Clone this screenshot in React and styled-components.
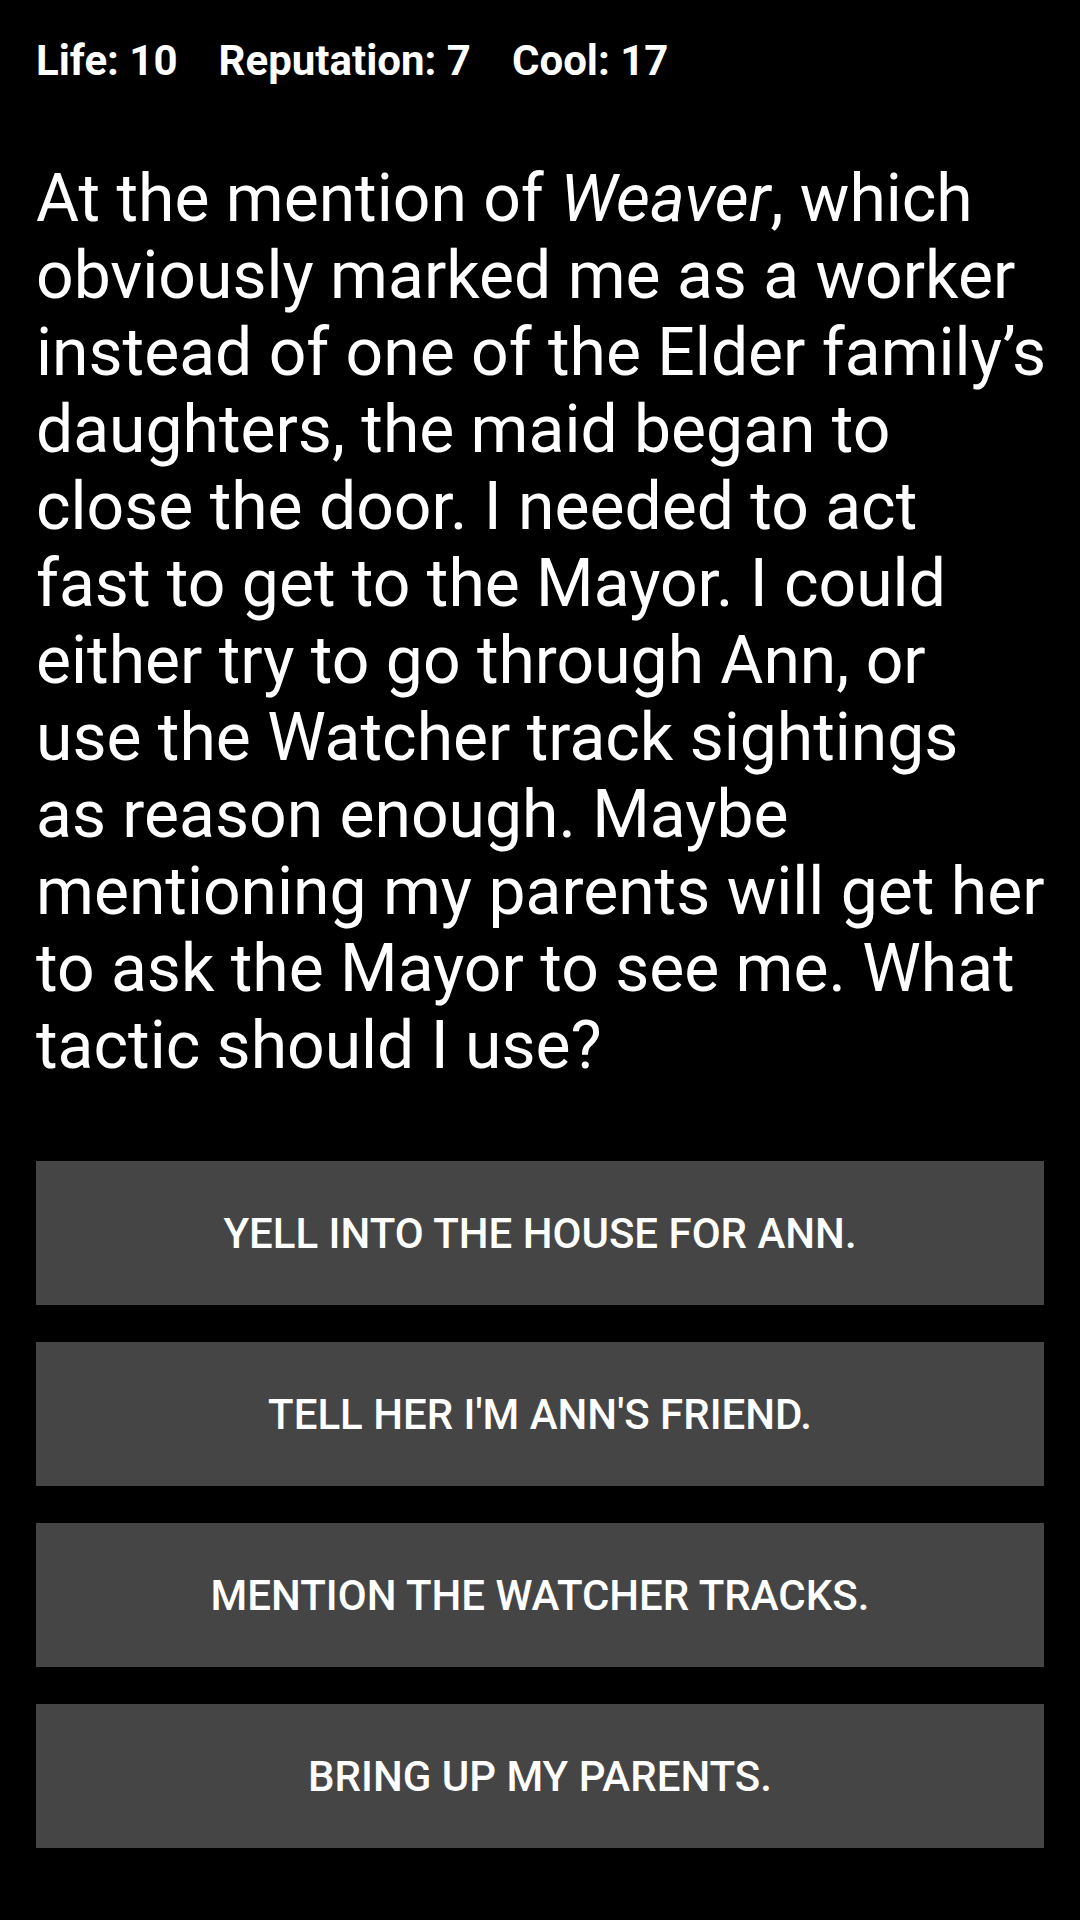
import React from "react";
import styled, { createGlobalStyle } from "styled-components";

const GlobalStyle = createGlobalStyle`
  html, body {
    margin: 0;
    padding: 0;
    background-color: #000;
  }
  body {
    font-family: Roboto, "Noto Sans", sans-serif;
    color: #fff;
  }
`;

const Screen = styled.div`
  min-height: 1920px;
  box-sizing: border-box;
  padding: 36px 36px 72px;
  display: flex;
  flex-direction: column;
  background-color: #000;
`;

const StatsBar = styled.div`
  display: flex;
  gap: 41px;
  font-size: 42px;
  font-weight: 700;
  line-height: 49px;
`;

const Stat = styled.span`
  white-space: nowrap;
`;

const Story = styled.p`
  margin: 75px 0 77px;
  font-size: 66px;
  font-weight: 400;
  line-height: 77px;
`;

// the device wrapped the passage at these points; keep them fixed
const StoryLine = styled.span`
  display: block;
  white-space: nowrap;
`;

const Choices = styled.div`
  display: flex;
  flex-direction: column;
  gap: 37px;
`;

const ChoiceButton = styled.button`
  height: 144px;
  border: none;
  border-radius: 0;
  background-color: #454545;
  color: #fff;
  font-family: Roboto, "Noto Sans", sans-serif;
  font-size: 42px;
  font-weight: 500;
  text-transform: uppercase;
  cursor: pointer;
  &:active {
    background-color: #555;
  }
`;

const stats = [
  { label: "Life", value: 10 },
  { label: "Reputation", value: 7 },
  { label: "Cool", value: 17 },
];

const storyLines = [
  <>
    At the mention of <em>Weaver</em>, which
  </>,
  "obviously marked me as a worker",
  "instead of one of the Elder family’s",
  "daughters, the maid began to",
  "close the door. I needed to act",
  "fast to get to the Mayor. I could",
  "either try to go through Ann, or",
  "use the Watcher track sightings",
  "as reason enough. Maybe",
  "mentioning my parents will get her",
  "to ask the Mayor to see me. What",
  "tactic should I use?",
];

const choices = [
  "Yell into the house for Ann.",
  "Tell her I'm Ann's friend.",
  "Mention the Watcher tracks.",
  "Bring up my parents.",
];

export default function App() {
  return (
    <>
      <GlobalStyle />
      <Screen>
        <StatsBar>
          {stats.map((s) => (
            <Stat key={s.label}>
              {s.label}: {s.value}
            </Stat>
          ))}
        </StatsBar>
        <Story>
          {storyLines.map((line, i) => (
            <StoryLine key={i}>{line}</StoryLine>
          ))}
        </Story>
        <Choices>
          {choices.map((c) => (
            <ChoiceButton key={c}>{c}</ChoiceButton>
          ))}
        </Choices>
      </Screen>
    </>
  );
}
